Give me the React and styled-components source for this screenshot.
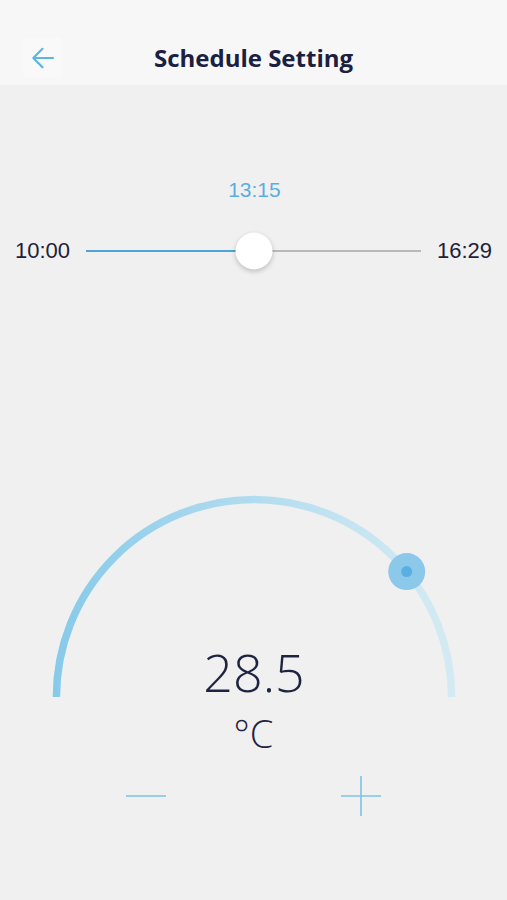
import React from "react";
import styled, { createGlobalStyle } from "styled-components";

const GlobalStyle = createGlobalStyle`
  html, body { margin: 0; padding: 0; background: #f0f0f0; }
  body { font-family: "Open Sans", "Liberation Sans", sans-serif; }
`;

const Page = styled.div`
  width: 507px;
  min-height: 900px;
  background: #f0f0f0;
  display: flex;
  flex-direction: column;
`;

const Header = styled.header`
  height: 85px;
  box-sizing: border-box;
  padding: 38px 0 0 23px;
  background: #f7f7f7;
  display: grid;
  grid-template-columns: 1fr auto 1fr;
  align-items: start;
`;

const BackButton = styled.button`
  width: 40px;
  height: 39px;
  border: none;
  border-radius: 4px;
  background: #f9f9f9;
  padding: 0;
  display: flex;
  align-items: center;
  justify-content: center;
  justify-self: start;
  cursor: pointer;
`;

const Title = styled.h1`
  margin: 0;
  margin-left: -23px;
  font-family: "Open Sans", sans-serif;
  font-weight: 700;
  font-size: 24px;
  line-height: 39px;
  color: #1b2040;
`;

const SliderSection = styled.section`
  margin-top: 93px;
  display: flex;
  flex-direction: column;
  gap: 30px;
`;

const ValueTrack = styled.div`
  position: relative;
  height: 24px;
  margin: 0 86px 0 87px;
`;

const ValueLabel = styled.span`
  position: absolute;
  top: 0;
  transform: translateX(-50%);
  font-family: "Liberation Sans", Arial, sans-serif;
  font-size: 21px;
  line-height: 24px;
  color: #5aafe0;
`;

const SliderRow = styled.div`
  display: flex;
  align-items: center;
  gap: 16px;
  padding: 0 15px;
  height: 37px;
`;

const TimeLabel = styled.span`
  font-family: "Liberation Sans", Arial, sans-serif;
  font-size: 22px;
  color: #1d2238;
  flex: none;
`;

const Track = styled.div`
  position: relative;
  flex: 1;
  height: 2px;
  background: #b9b9b9;
`;

const Fill = styled.div`
  height: 100%;
  background: #4aa6d8;
`;

const Thumb = styled.div`
  position: absolute;
  top: 50%;
  width: 37px;
  height: 37px;
  border-radius: 50%;
  background: #ffffff;
  box-shadow: 0 2px 5px rgba(0, 0, 0, 0.22);
  transform: translate(-50%, -50%);
`;

const Dial = styled.section`
  margin-top: 218px;
  display: grid;
  justify-items: center;
`;

const ArcSvg = styled.svg`
  grid-area: 1 / 1;
  align-self: start;
  display: block;
`;

const Readout = styled.div`
  grid-area: 1 / 1;
  margin-top: 150px;
  display: flex;
  flex-direction: column;
  align-items: center;
  color: #1e2440;
  font-family: "Open Sans", sans-serif;
  font-weight: 300;
`;

const Temp = styled.span`
  font-size: 52px;
  line-height: 70px;
  margin-left: 1px;
`;

const Unit = styled.span`
  font-size: 38px;
  line-height: 52px;
`;

const Controls = styled.div`
  margin: 17px auto 0;
  width: 255px;
  display: flex;
  justify-content: space-between;
`;

const StepButton = styled.button`
  width: 40px;
  height: 40px;
  border: none;
  background: transparent;
  padding: 0;
  cursor: pointer;
  display: block;
`;

const toMin = (t) => {
  const [h, m] = t.split(":").map(Number);
  return h * 60 + m;
};

const start = "10:00";
const end = "16:29";
const current = "13:15";
const pct = ((toMin(current) - toMin(start)) / (toMin(end) - toMin(start))) * 100;

// dial geometry
const R = 197.6;
const CX = 210;
const CY = 210;
const knobAngle = Math.atan2(125.8, 153.2);
const kx = CX + R * Math.cos(knobAngle);
const ky = CY - R * Math.sin(knobAngle);

export default function App() {
  return (
    <Page>
      <GlobalStyle />
      <Header>
        <BackButton aria-label="Back">
          <svg width="24" height="22" viewBox="0 0 24 22" fill="none">
            <path
              d="M22 11H2.5M11.5 1.8L2.3 11l9.2 9.2"
              stroke="#5db5e2"
              strokeWidth="2.2"
              strokeLinecap="round"
              strokeLinejoin="round"
            />
          </svg>
        </BackButton>
        <Title>Schedule Setting</Title>
        <span />
      </Header>

      <SliderSection>
        <ValueTrack>
          <ValueLabel style={{ left: `${pct}%` }}>{current}</ValueLabel>
        </ValueTrack>
        <SliderRow>
          <TimeLabel>{start}</TimeLabel>
          <Track>
            <Fill style={{ width: `${pct}%` }} />
            <Thumb style={{ left: `${pct}%` }} />
          </Track>
          <TimeLabel>{end}</TimeLabel>
        </SliderRow>
      </SliderSection>

      <Dial>
        <ArcSvg width="420" height="218" viewBox="0 0 420 218">
          <defs>
            <linearGradient id="arcGrad" x1="0" y1="0" x2="420" y2="0" gradientUnits="userSpaceOnUse">
              <stop offset="0" stopColor="#84c9e9" />
              <stop offset="0.5" stopColor="#b2dcef" />
              <stop offset="0.75" stopColor="#c6e5f2" />
              <stop offset="1" stopColor="#d6ebf3" />
            </linearGradient>
          </defs>
          <path
            d={`M ${CX - R} ${CY} A ${R} ${R} 0 0 1 ${CX + R} ${CY}`}
            fill="none"
            stroke="url(#arcGrad)"
            strokeWidth="7.5"
          />
          <circle cx={kx} cy={ky} r="18.5" fill="#8cc8ea" />
          <circle cx={kx} cy={ky} r="5.5" fill="#5aaee2" />
        </ArcSvg>
        <Readout>
          <Temp>28.5</Temp>
          <Unit>°C</Unit>
        </Readout>
      </Dial>

      <Controls>
        <StepButton aria-label="Decrease">
          <svg width="40" height="40" viewBox="0 0 40 40">
            <path d="M0 20H40" stroke="#7cc3e8" strokeWidth="1.6" />
          </svg>
        </StepButton>
        <StepButton aria-label="Increase">
          <svg width="40" height="40" viewBox="0 0 40 40">
            <path d="M0 20H40M20 0V40" stroke="#7cc3e8" strokeWidth="1.6" />
          </svg>
        </StepButton>
      </Controls>
    </Page>
  );
}
